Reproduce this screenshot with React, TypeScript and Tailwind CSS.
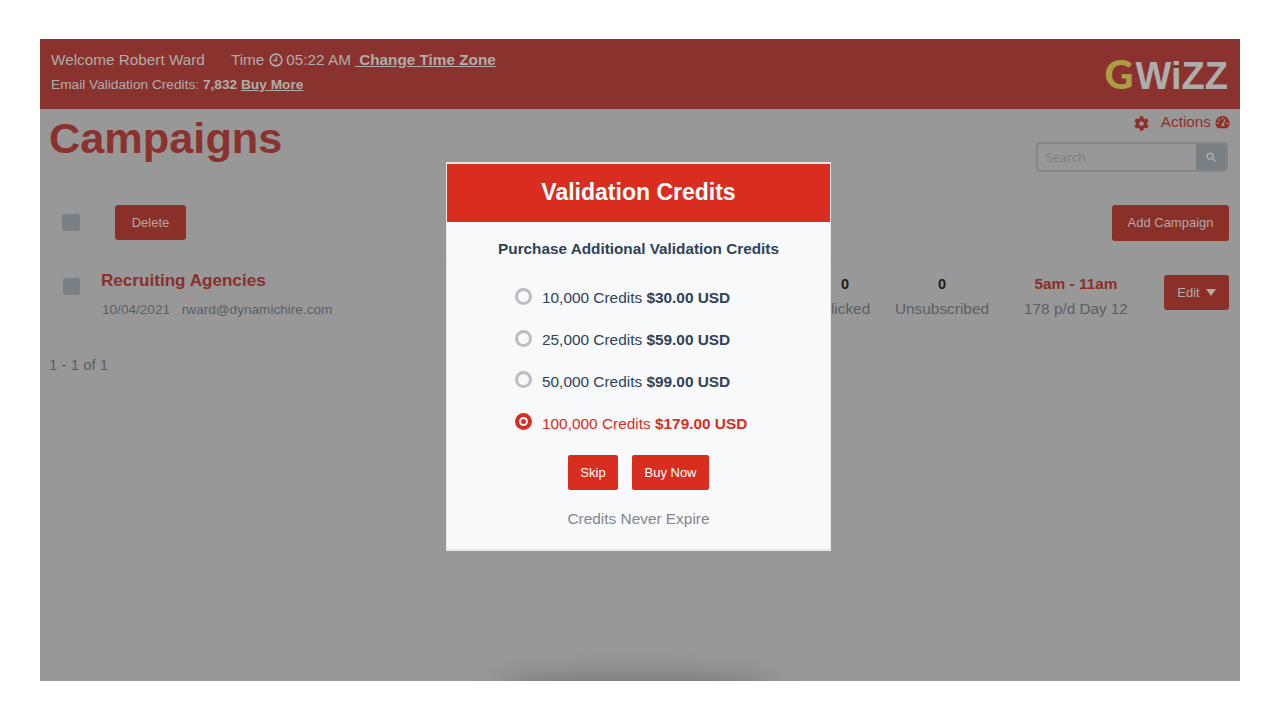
import { FaCog } from "react-icons/fa";
import { MdSearch } from "react-icons/md";

interface Option {
  credits: string;
  price: string;
  selected?: boolean;
}

const options: Option[] = [
  { credits: "10,000 Credits", price: "$30.00 USD" },
  { credits: "25,000 Credits", price: "$59.00 USD" },
  { credits: "50,000 Credits", price: "$99.00 USD" },
  { credits: "100,000 Credits", price: "$179.00 USD", selected: true },
];

const ClockIcon = () => (
  <svg viewBox="0 0 14 14" className="ml-[5px] h-[14px] w-[14px]" fill="none" stroke="currentColor">
    <circle cx="7" cy="7" r="5.9" strokeWidth="1.6" />
    <path d="M7.4 3.4V7.5H4.2" strokeWidth="1.4" />
  </svg>
);

const GaugeIcon = () => (
  <svg viewBox="0 0 16 16" className="ml-[4px] h-[15px] w-[15px]">
    <path d="M8 1a7.5 7.5 0 0 1 6.2 11.7L13 14H3l-1.2-1.3A7.5 7.5 0 0 1 8 1z" fill="currentColor" />
    <circle cx="8" cy="3.6" r="1" fill="#989898" />
    <circle cx="4.4" cy="5.2" r="1" fill="#989898" />
    <circle cx="3" cy="8.8" r="1" fill="#989898" />
    <circle cx="13" cy="8.8" r="1" fill="#989898" />
    <path d="M10.8 4.6 8.9 9.3" stroke="#989898" strokeWidth="1.3" />
    <circle cx="8.4" cy="10.4" r="1.6" fill="#989898" />
  </svg>
);

const Stat = ({ value, label, width }: { value: string; label: string; width: string }) => (
  <div className={`${width} flex flex-col items-center`}>
    <span className="text-[14.5px] leading-[20px] font-bold text-[#1c1c1c]">{value}</span>
    <span className="mt-[5px] text-[15.4px] leading-[20px] text-[#5a5f65]">{label}</span>
  </div>
);

const Radio = ({ selected }: { selected?: boolean }) =>
  selected ? (
    <span className="flex h-[17px] w-[17px] items-center justify-center rounded-full border-[4px] border-[#d92d20]">
      <span className="h-[5px] w-[5px] rounded-full bg-[#d92d20]" />
    </span>
  ) : (
    <span className="block h-[17px] w-[17px] rounded-full border-[3px] border-[#babdc2]" />
  );

const Modal = () => (
  <div className="absolute left-[406px] top-[123px] h-[389px] w-[385px] border-x border-t-2 border-b-2 border-[#e6e6e6] bg-[#f7f9fb]">
    <div className="flex h-[58px] items-center justify-center bg-[#d92d20] pb-[2px] text-[23px] font-bold text-white">
      Validation Credits
    </div>
    <span className="absolute right-[10px] top-[63px] text-[14px] leading-[14px] font-bold text-white">×</span>
    <div className="mt-[17px] text-center text-[15.3px] leading-[20px] font-bold text-[#2f4258]">
      Purchase Additional Validation Credits
    </div>
    <div className="ml-[68px] mt-[29px] flex flex-col gap-[21.7px]">
      {options.map((o) => (
        <div
          key={o.credits}
          className={`flex h-[20px] items-center gap-[10px] text-[15.4px] ${o.selected ? "text-[#d92d20]" : "text-[#2f4258]"}`}
        >
          <span className="-mt-[3px]">
            <Radio selected={o.selected} />
          </span>
          <span>
            {o.credits} <b>{o.price}</b>
          </span>
        </div>
      ))}
    </div>
    <div className="mt-[22px] flex justify-center gap-[14px]">
      <button className="h-[35px] w-[50px] rounded-[2px] bg-[#d92d20] text-[13px] text-white">Skip</button>
      <button className="h-[35px] w-[77px] rounded-[2px] bg-[#d92d20] text-[13px] text-white">Buy Now</button>
    </div>
    <div className="mt-[19px] text-center text-[15.4px] leading-[20px] text-[#85868a]">Credits Never Expire</div>
  </div>
);

export default function App() {
  return (
    <div className="h-[720px] w-[1280px] overflow-hidden bg-white px-[40px] pt-[39px] font-['Liberation_Sans',Arial,sans-serif]">
      <div className="relative h-[642px] w-[1200px] overflow-hidden bg-[#989898]">
        <header className="flex h-[70px] justify-between bg-[#8a332e] pl-[11px] pr-[12px] text-[#b0acab]">
          <div>
            <div className="mt-[11px] flex items-center text-[15.3px] leading-[20px]">
              <span>Welcome Robert Ward</span>
              <span className="ml-[26px]">Time</span>
              <ClockIcon />
              <span className="ml-[3px]">05:22 AM</span>
              <span className="ml-[4px] font-bold underline">&nbsp;Change Time Zone</span>
            </div>
            <div className="mt-[6px] text-[13.7px] leading-[18px]">
              Email Validation Credits: <b>7,832</b> <b className="underline">Buy More</b>
            </div>
          </div>
          <div className="mt-[13px] flex items-baseline text-[38px] leading-[44px] font-bold">
            <span className="mr-[2px] font-['Lato',sans-serif] text-[40px] font-black text-[#ad9c45]">G</span>
            <span className="text-[#adadad]">WiZZ</span>
          </div>
        </header>

        <div className="flex justify-between pl-[9px] pr-[12px]">
          <h1 className="mt-[5px] text-[43.3px] leading-[48px] font-bold text-[#8a332e]">Campaigns</h1>
          <div className="flex w-[192px] flex-col">
            <div className="-mr-[2px] mt-[4px] flex h-[18px] items-center justify-end text-[15.3px] text-[#8f2f2a]">
              <FaCog className="mr-[12px] mt-[3px] text-[15px]" />
              <span>Actions</span>
              <GaugeIcon />
            </div>
            <div className="mt-[11px] flex h-[30px] overflow-hidden rounded-[4px] border-2 border-[#868686]">
              <div className="flex flex-1 items-center pl-[8px] pt-[2px] font-['Open_Sans',sans-serif] text-[12.5px] text-[#7e7e7e]">
                Search
              </div>
              <div className="flex w-[30px] items-center justify-center bg-[#7a7f84] text-[#b6b8ba]">
                <MdSearch className="text-[13px]" />
              </div>
            </div>
          </div>
        </div>

        <div className="mt-[33px] flex items-start justify-between pl-[22px] pr-[11px]">
          <div className="flex items-start">
            <span className="mt-[9px] h-[17px] w-[18px] rounded-[3px] bg-[#7a7f84]" />
            <button className="ml-[35px] h-[35px] w-[71px] rounded-[3px] bg-[#8b2f29] text-[13px] text-[#b3a9a7]">
              Delete
            </button>
          </div>
          <button className="h-[36px] w-[117px] rounded-[3px] bg-[#8b2f29] text-[13px] text-[#b3a9a7]">
            Add Campaign
          </button>
        </div>

        <div className="mx-[9px] mt-[21px] border-t border-[#929292] pr-[2px]">
          <div className="flex pt-[7px]">
            <span className="ml-[14px] mt-[8px] h-[17px] w-[17px] rounded-[3px] bg-[#7a7f84]" />
            <div className="ml-[21px] flex-1">
              <div className="text-[17.1px] leading-[22px] font-bold text-[#8b2f29]">Recruiting Agencies</div>
              <div className="ml-[1px] mt-[8px] text-[13.6px] leading-[20px] text-[#5a5f65]">
                10/04/2021 <span className="ml-[8px]">rward@dynamichire.com</span>
              </div>
            </div>
            <div className="mt-[4px] flex">
              <Stat value="0" label="Clicked" width="w-[58px]" />
              <Stat value="0" label="Unsubscribed" width="w-[134px] pl-[2px]" />
              <div className="flex w-[136px] flex-col items-center">
                <span className="text-[15.4px] leading-[20px] font-bold text-[#8b2f29]">5am - 11am</span>
                <span className="mt-[5px] text-[15.3px] leading-[20px] text-[#5a5f65]">178 p/d Day 12</span>
              </div>
            </div>
            <button className="mt-[5px] ml-[20px] flex h-[35px] w-[65px] items-center justify-center gap-[6px] rounded-[3px] bg-[#8b2f29] text-[13px] text-[#b3a9a7]">
              Edit
              <span className="h-0 w-0 border-x-[5px] border-t-[7px] border-x-transparent border-t-[#b3a9a7]" />
            </button>
          </div>
        </div>

        <div className="ml-[9px] mt-[35px] text-[15px] leading-[20px] text-[#5a5f65]">1 - 1 of 1</div>

        <div className="absolute bottom-[-20px] left-[455px] h-[26px] w-[280px] rounded-[50%] bg-[#757575] blur-[12px]" />
        <Modal />
      </div>
    </div>
  );
}
